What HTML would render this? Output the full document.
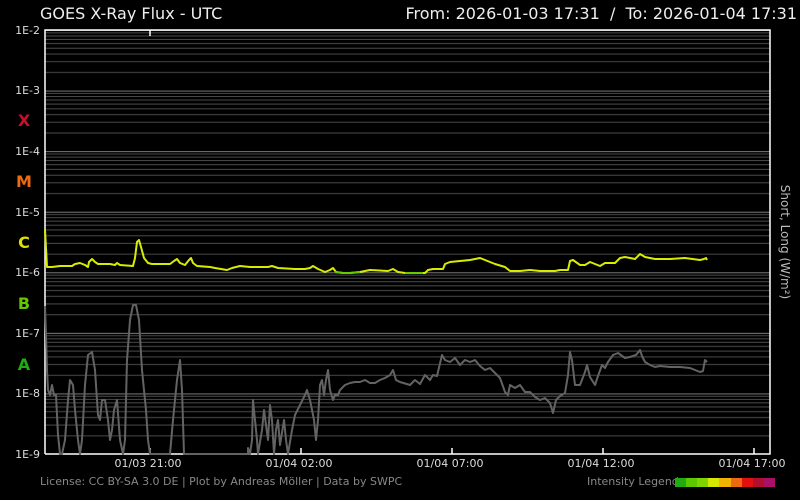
<!DOCTYPE html>
<html><head><style>
html,body{margin:0;background:#000;width:800px;height:500px;overflow:hidden}
svg{display:block}
svg text{font-family:"DejaVu Sans","Liberation Sans",sans-serif}
</style></head><body>
<svg width="800" height="500" xmlns="http://www.w3.org/2000/svg">
<defs>
<pattern id="g" x="0" y="30" width="800" height="60.571" patternUnits="userSpaceOnUse">
<g stroke="#4a4a4a" stroke-width="1">
<line x1="0" x2="800" y1="42.4" y2="42.4"/><line x1="0" x2="800" y1="31.7" y2="31.7"/>
<line x1="0" x2="800" y1="24.1" y2="24.1"/><line x1="0" x2="800" y1="18.3" y2="18.3"/>
<line x1="0" x2="800" y1="13.5" y2="13.5"/><line x1="0" x2="800" y1="9.4" y2="9.4"/>
<line x1="0" x2="800" y1="5.9" y2="5.9"/><line x1="0" x2="800" y1="2.8" y2="2.8"/>
</g>
<line x1="0" x2="800" y1="0.5" y2="0.5" stroke="#7a7a7a" stroke-width="1"/>
</pattern>
</defs>
<rect x="45" y="30" width="725" height="424" fill="url(#g)"/>
<polyline fill="none" stroke="#fff" stroke-width="1.5" points="45,454 45,30 770,30 770,454 45,454"/>
<g stroke="#fff" stroke-width="1.5">
<line x1="150" y1="30" x2="150" y2="36"/>
<line x1="150" y1="454" x2="150" y2="448"/><line x1="301" y1="454" x2="301" y2="448"/>
<line x1="452" y1="454" x2="452" y2="448"/><line x1="603" y1="454" x2="603" y2="448"/>
<line x1="754" y1="454" x2="754" y2="448"/>
</g>
<polyline fill="none" stroke="#636363" stroke-width="2" stroke-linejoin="round" points="45,306 46,335 47,370 48,390 50,395 52,385 54,395 56,395 57,415 58,435 60,454 62,454 65,440 68,400 70,380 73,385 75,410 78,440 80,454 82,440 85,385 88,355 92,352 95,370 98,415 100,420 102,400 105,400 108,420 110,440 112,430 114,410 117,400 120,440 123,454 125,440 127,360 130,320 133,305 136,305 139,320 142,370 146,410 148,440 150,454 170,454 173,420 175,400 177,380 180,360 182,390 184,454 248,454 248,448 250,454 252,440 253,400 255,420 257,440 258,454 262,430 264,410 266,425 268,440 270,405 272,420 274,454 276,430 278,420 280,445 284,420 286,440 288,454 292,430 295,415 300,405 305,395 307,390 310,400 312,410 314,420 316,440 318,420 320,385 322,380 324,395 326,380 328,370 330,390 333,400 335,395 338,395 340,390 345,385 350,383 355,382 360,382 365,380 370,383 375,383 380,380 385,378 390,375 393,370 396,380 400,382 410,385 415,380 420,384 425,375 430,380 433,375 437,376 442,355 445,360 450,362 455,358 460,365 465,360 470,362 475,360 480,366 485,370 490,368 495,373 500,378 505,392 508,395 510,385 515,388 520,385 525,392 530,392 535,397 540,400 545,398 550,403 553,413 556,400 560,396 565,393 568,375 570,352 572,360 575,385 580,385 585,372 587,365 590,377 595,385 598,376 602,365 605,368 608,362 613,355 618,353 625,358 630,357 636,355 640,350 642,356 645,362 650,365 655,367 660,366 670,367 680,367 690,368 695,370 700,372 703,371 705,360 707,362"/>
<polyline fill="none" stroke="#d8ec00" stroke-width="2" stroke-linejoin="round" points="45,230 46,248 47,267 52,267 60,266 72,266 75,264 80,263 85,265 88,267 89,262 92,259 95,262 98,264 110,264 115,265 117,263 120,265 133,266 135,258 137,242 139,240 141,247 144,258 148,263 152,264 170,264 174,261 177,259 180,263 185,265 189,260 191,258 193,263 197,266 210,267 215,268 227,270 232,268 240,266 250,267 268,267 272,266 278,268 295,269 305,269 310,268 313,266 318,269 325,272 330,270 333,268 336,272 343,273 350,273 360,272 370,270 388,271 393,269 398,272 405,273 415,273 425,273 428,270 433,269 443,269 445,264 450,262 460,261 470,260 480,258 485,260 495,264 505,267 510,271 520,271 530,270 540,271 555,271 560,270 568,270 570,261 573,260 580,265 585,265 590,262 595,264 600,266 605,263 615,263 620,258 625,257 635,259 640,254 645,257 655,259 670,259 685,258 700,260 704,259 706,258 707,260"/>
<polyline fill="none" stroke="#66cc00" stroke-width="2" points="335,272 343,273 350,273 360,272"/>
<polyline fill="none" stroke="#66cc00" stroke-width="2" points="405,273 415,273 423,273"/>
<g fill="#ddd" font-size="11" text-anchor="end">
<text x="40" y="34">1E-2</text><text x="40" y="94">1E-3</text><text x="40" y="155">1E-4</text>
<text x="40" y="216">1E-5</text><text x="40" y="276">1E-6</text><text x="40" y="337">1E-7</text>
<text x="40" y="397">1E-8</text><text x="40" y="458">1E-9</text>
</g>
<g font-size="16" font-weight="bold" text-anchor="middle">
<text x="24" y="126" fill="#c8102e">X</text><text x="24" y="187" fill="#ee6a10">M</text>
<text x="24" y="248" fill="#dde000">C</text><text x="24" y="309" fill="#66c800">B</text>
<text x="24" y="370" fill="#22aa11">A</text>
</g>
<text x="40" y="19" fill="#eee" font-size="16">GOES X-Ray Flux - UTC</text>
<text x="797" y="19" fill="#eee" font-size="16" text-anchor="end">From: 2026-01-03 17:31&#160;&#160;/&#160;&#160;To: 2026-01-04 17:31</text>
<text transform="translate(781,242) rotate(90)" fill="#bbb" font-size="12" text-anchor="middle">Short, Long (W/m²)</text>
<g fill="#ddd" font-size="11" text-anchor="middle">
<text x="148" y="467">01/03 21:00</text><text x="299" y="467">01/04 02:00</text>
<text x="450" y="467">01/04 07:00</text><text x="601" y="467">01/04 12:00</text>
<text x="752" y="467">01/04 17:00</text>
</g>
<text x="40" y="485" fill="#888" font-size="11">License: CC BY-SA 3.0 DE | Plot by Andreas Möller | Data by SWPC</text>
<text x="587" y="485" fill="#888" font-size="11">Intensity Legend</text>
<rect x="675" y="478" width="12" height="9" fill="#22aa11"/><rect x="686" y="478" width="12" height="9" fill="#5cc800"/>
<rect x="697" y="478" width="12" height="9" fill="#7fd400"/><rect x="708" y="478" width="12" height="9" fill="#d4e800"/>
<rect x="719" y="478" width="12" height="9" fill="#f0b400"/><rect x="731" y="478" width="11" height="9" fill="#ee6a10"/>
<rect x="742" y="478" width="11" height="9" fill="#e41010"/><rect x="753" y="478" width="11" height="9" fill="#b0102e"/>
<rect x="764" y="478" width="11" height="9" fill="#a8106a"/>
</svg>
</body></html>
